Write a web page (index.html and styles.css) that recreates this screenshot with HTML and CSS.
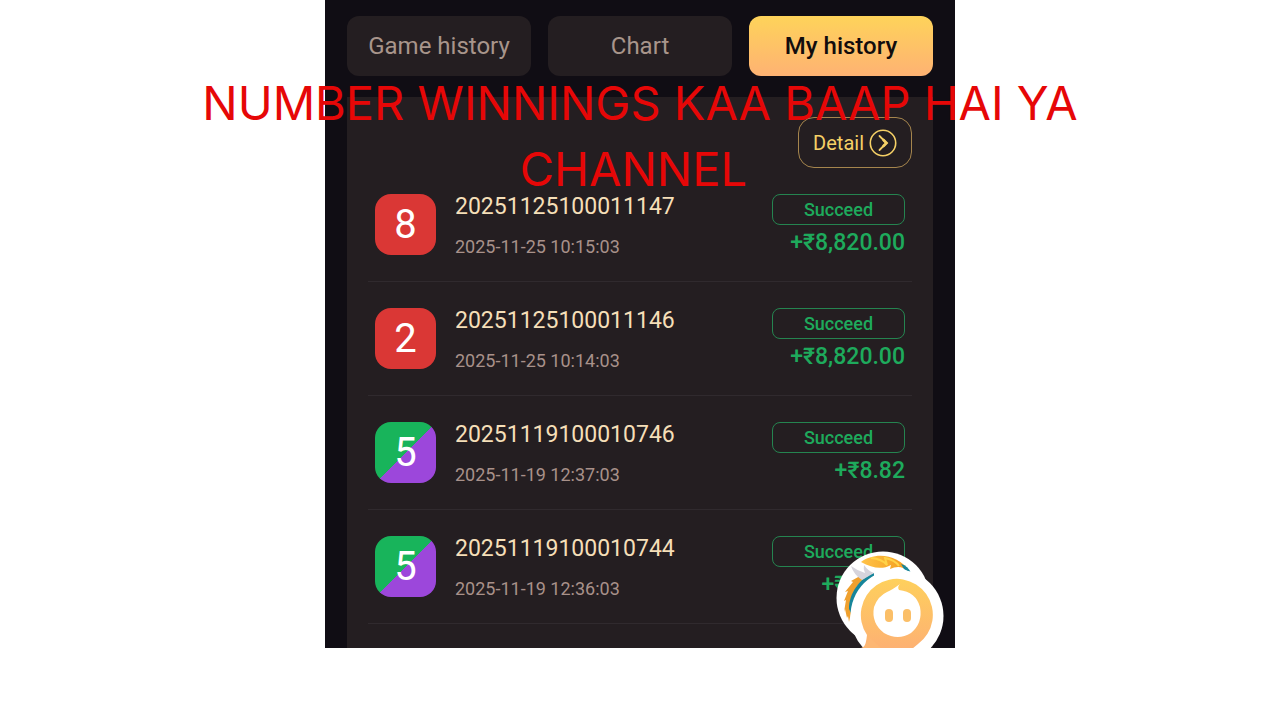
FILE: index.html
```html
<!DOCTYPE html>
<html lang="en">
<head>
    <meta charset="UTF-8">
    <meta name="viewport" content="width=device-width, initial-scale=1.0">
    <title>My history</title>
    <link rel="stylesheet" href="styles.css">
</head>
<body>
<h1 class="caption">NUMBER WINNINGS KAA BAAP HAI YA CHANNEL&nbsp;</h1>

<main class="phone">
<nav class="tabs">
<button class="tab" type="button">Game history</button>
<button class="tab" type="button">Chart</button>
<button class="tab active" type="button">My history</button>
</nav>

<section class="panel">
<div class="panel-head">
<button class="detail-btn" type="button">Detail
<svg class="detail-icon" viewBox="0 0 28 28" fill="none" stroke="currentColor">
<circle cx="14" cy="14" r="12.700" stroke-width="1.600"/>
<path d="M10.500 7 L17.500 14 L10.500 21" stroke-width="1.800" stroke-linecap="round"/>
<path d="M14.500 11 L17.500 14 L14.500 17" stroke-width="2.600" stroke-linecap="round"/>
</svg>
</button>
</div>

<ul class="bets">
<li class="bet">
<div class="number red">8</div>
<div class="info">
<div class="period">20251125100011147</div>
<div class="time">2025-11-25 10:15:03</div>
</div>
<div class="result">
<div class="state">Succeed</div>
<div class="amount">+₹8,820.00</div>
</div>
</li>
<li class="bet">
<div class="number red">2</div>
<div class="info">
<div class="period">20251125100011146</div>
<div class="time">2025-11-25 10:14:03</div>
</div>
<div class="result">
<div class="state">Succeed</div>
<div class="amount">+₹8,820.00</div>
</div>
</li>
<li class="bet">
<div class="number mixed">5</div>
<div class="info">
<div class="period">20251119100010746</div>
<div class="time">2025-11-19 12:37:03</div>
</div>
<div class="result">
<div class="state">Succeed</div>
<div class="amount">+₹8.82</div>
</div>
</li>
<li class="bet">
<div class="number mixed">5</div>
<div class="info">
<div class="period">20251119100010744</div>
<div class="time">2025-11-19 12:36:03</div>
</div>
<div class="result">
<div class="state">Succeed</div>
<div class="amount">+₹88.20</div>
</div>
</li>
</ul>
</section>

<!-- floating support button with the mascot behind it -->
<button class="support" type="button" aria-label="Support">
<svg viewBox="0 0 108 98">
<defs>
<linearGradient id="gold" x1="0" y1="0" x2="0" y2="1">
<stop offset="0" stop-color="#fed05c"/>
<stop offset="1" stop-color="#fdb173"/>
</linearGradient>
<linearGradient id="hair" x1="0" y1="0" x2="1" y2="0">
<stop offset="0" stop-color="#ffc34a"/>
<stop offset="1" stop-color="#f29a18"/>
</linearGradient>
</defs>
<circle cx="47" cy="47" r="46.500" fill="#fff"/>
<path d="M33 24 C20 32 13 46 15 62 L13 71 L12 65 L11 67 L9 58 L8 61 L10 49 L8 50 L12 40 L9 41 L17 31 L15 30 L24 25 Z" fill="#efa02e"/>
<path d="M38 22 C24 27 13 42 13 58 L15 62 C17 46 25 34 38 25 Z" fill="#16859a"/>
<path d="M15 15 Q22 20 29 22 Q27 18 28 14 Q32 20 38 22 L26 29 Q18 24 15 15 Z" fill="#d6d4dc"/>
<path d="M25 11 C38 1 62 2 74 21 C66 15 61 15 54 18 L55 14 C46 19 36 17 25 11 Z" fill="url(#hair)"/>
<path d="M35 7 Q46 8 51 14 L49 7 Q59 9 63 15" fill="none" stroke="#ffd348" stroke-width="2"/>
<path d="M65 13 Q72 15 75 22 L68 18 Z" fill="#16859a"/>
<circle cx="61" cy="65" r="46.500" fill="#fff"/>
<path d="M27 98 Q30 94 31 84 A36 36 0 1 1 82 93 L76 98 Z" fill="url(#gold)"/>
<path d="M25 97 Q31 95 33 86 L46 98 Z" fill="#fdb773"/>
<path d="M64 33 Q61 36 63 39 Q80 41 84 56 Q87 72 75 82 Q62 90 48 82 Q35 72 38 56 Q42 45 51 41 Q56 39 64 33 Z" fill="#fff"/>
<rect x="49" y="58" width="8" height="13" rx="4" fill="#fbbf68"/>
<rect x="67" y="58" width="8" height="13" rx="4" fill="#fbbf68"/>
</svg>
</button>
</main>
</body>
</html>
```

FILE: styles.css
```css
* {
margin: 0;
padding: 0;
box-sizing: border-box;
}

body {
background-color: #ffffff;
font-family: Roboto, "Noto Sans", sans-serif;
}

button {
font-family: inherit;
cursor: pointer;
}

.caption {
position: absolute;
z-index: 2;
top: 70px;
left: 0;
width: 100%;
padding: 0 180px;
text-align: center;
font-family: Inter, sans-serif;
font-size: 47px;
line-height: 66px;
font-weight: 400;
color: #e60707;
pointer-events: none;
}

.phone {
position: relative;
display: flex;
flex-direction: column;
gap: 21px;
max-width: 630px;
height: 90vh;
margin: 0 auto;
padding: 16px 22px 0;
background-color: #100d14;
overflow: hidden;
}

.tabs {
display: grid;
grid-template-columns: repeat(3, 1fr);
gap: 17px;
}

.tab {
height: 60px;
border: none;
border-radius: 12px;
background-color: #241e21;
color: #a8958b;
font-size: 24px;
}

.active {
background-image: linear-gradient(#fed35a, #feb273);
color: #120d0d;
font-weight: 500;
}

.panel {
flex: 1;
padding: 20px 21px 0;
background-color: #241e21;
}

.panel-head {
display: flex;
justify-content: flex-end;
}

.detail-btn {
display: flex;
align-items: center;
gap: 5px;
height: 51px;
padding: 0 14px;
border: 1px solid #a5854d;
border-radius: 16px;
background: none;
color: #f5d066;
font-size: 20px;
}

.detail-icon {
width: 28px;
height: 28px;
}

.bets {
list-style: none;
}

.bet {
display: flex;
align-items: flex-start;
height: 114px;
padding: 26px 7px 0;
border-bottom: 1px solid #302a2e;
}

.number {
display: flex;
justify-content: center;
align-items: center;
width: 61px;
height: 61px;
margin-right: 19px;
border-radius: 16px;
color: #ffffff;
font-size: 40px;
}

.red {
background-color: #da3735;
}

.mixed {
background-image: linear-gradient(135deg, #18b45b 50%, #9c47db 50%);
}

.info {
flex: 1;
}

.period {
line-height: 26px;
font-size: 23px;
color: #f5dfb8;
}

.time {
margin-top: 15px;
line-height: 24px;
font-size: 18px;
color: #a8918a;
}

.result {
width: 133px;
text-align: right;
}

.state {
height: 31px;
border: 1px solid #258450;
border-radius: 8px;
text-align: center;
line-height: 29px;
font-size: 18px;
font-weight: 500;
color: #1eaa5c;
}

.amount {
margin-top: 4px;
line-height: 28px;
font-size: 23px;
font-weight: 500;
color: #1eaa5c;
}

.support {
position: absolute;
right: 11px;
bottom: -1px;
width: 108px;
height: 98px;
border: none;
background: none;
}

.support svg {
display: block;
width: 100%;
}
```
